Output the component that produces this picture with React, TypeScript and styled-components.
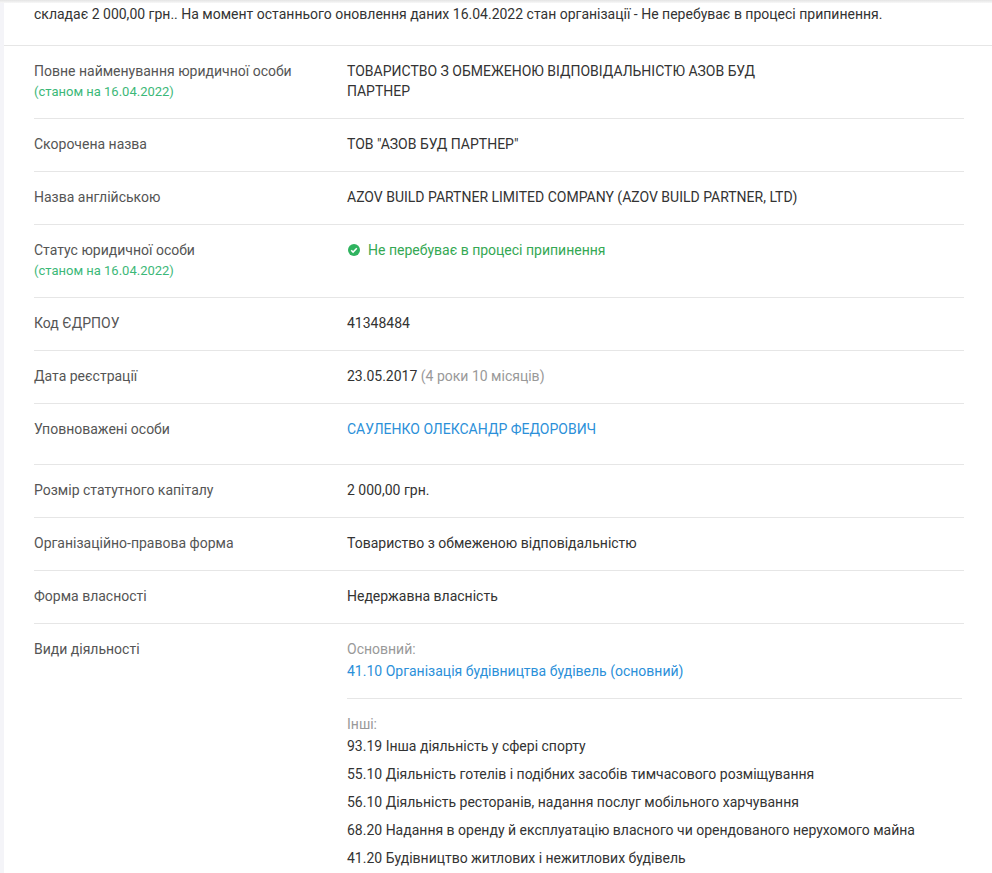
import React from 'react'
import styled, { createGlobalStyle } from 'styled-components'

const GlobalStyle = createGlobalStyle`
  html, body {
    margin: 0;
    height: 873px;
    overflow: hidden;
    background: #fff;
  }
  body {
    font-family: Roboto, "Liberation Sans", sans-serif;
    font-size: 14px;
    line-height: 20px;
    color: #333;
  }
`

const Page = styled.div`
  position: relative;
  height: 873px;
  overflow: hidden;
  padding-left: 4px;
  background: #f4f4f8;
`

const TopShadow = styled.div`
  position: absolute;
  top: 0;
  left: 0;
  right: 0;
  height: 3px;
  background: linear-gradient(#e4e4e4, #f8f8f8);
`

const Card = styled.div`
  background: #fff;
  height: 873px;
`

const Summary = styled.div`
  height: 41px;
  padding: 4px 30px 0;
  border-bottom: 1px solid #e6e6e6;
  white-space: nowrap;
  color: #333;
`

const Table = styled.div`
  padding: 0 28px 0 30px;
`

const Row = styled.div<{ $extra?: number }>`
  display: flex;
  padding: 15px 0 ${({ $extra }) => 17 + ($extra || 0)}px;
  border-bottom: 1px solid #e6e6e6;

  &:last-child {
    border-bottom: none;
  }
`

const Label = styled.div`
  width: 313px;
  flex: none;
  color: #555;
`

const AsOf = styled.div`
  margin: 1px 0 -1px;
  color: #3cb878;
  font-size: 13px;
`

const Value = styled.div`
  flex: 1;
  min-width: 0;
  color: #333;
`

const Name = styled.div`
  max-width: 440px;
`

const Status = styled.div`
  display: flex;
  align-items: center;
  gap: 8px;
  color: #34a853;
`

const StatusIcon = styled.svg`
  width: 12px;
  height: 12px;
  margin-left: 1px;
  flex: none;
`

const Muted = styled.span`
  color: #999;
`

const Link = styled.a`
  color: #2b90d9;
  text-decoration: none;
`

const GroupTitle = styled.div`
  color: #999;
  margin-bottom: 2px;
`

const MainActivity = styled.div`
  padding-bottom: 17px;
  margin-bottom: 15px;
  margin-right: 2px;
  border-bottom: 1px solid #e6e6e6;
`

const Activity = styled.div`
  margin-bottom: 8px;
`

const others = [
  '93.19 Інша діяльність у сфері спорту',
  '55.10 Діяльність готелів і подібних засобів тимчасового розміщування',
  '56.10 Діяльність ресторанів, надання послуг мобільного харчування',
  '68.20 Надання в оренду й експлуатацію власного чи орендованого нерухомого майна',
  '41.20 Будівництво житлових і нежитлових будівель'
]

export default function App() {
  return (
    <Page>
      <GlobalStyle />
      <Card>
        <Summary>
          складає 2 000,00 грн.. На момент останнього оновлення даних 16.04.2022 стан організації - Не перебуває в процесі припинення.
        </Summary>
        <Table>
          <Row>
            <Label>
              Повне найменування юридичної особи
              <AsOf>(станом на 16.04.2022)</AsOf>
            </Label>
            <Value>
              <Name>ТОВАРИСТВО З ОБМЕЖЕНОЮ ВІДПОВІДАЛЬНІСТЮ АЗОВ БУД ПАРТНЕР</Name>
            </Value>
          </Row>
          <Row>
            <Label>Скорочена назва</Label>
            <Value>ТОВ "АЗОВ БУД ПАРТНЕР"</Value>
          </Row>
          <Row>
            <Label>Назва англійською</Label>
            <Value>AZOV BUILD PARTNER LIMITED COMPANY (AZOV BUILD PARTNER, LTD)</Value>
          </Row>
          <Row>
            <Label>
              Статус юридичної особи
              <AsOf>(станом на 16.04.2022)</AsOf>
            </Label>
            <Value>
              <Status>
                <StatusIcon viewBox="0 0 12 12">
                  <circle cx="6" cy="6" r="6" fill="#2fb35f" />
                  <path d="M3.2 6.2l1.9 1.9 3.7-3.8" fill="none" stroke="#fff" strokeWidth="1.5" />
                </StatusIcon>
                Не перебуває в процесі припинення
              </Status>
            </Value>
          </Row>
          <Row>
            <Label>Код ЄДРПОУ</Label>
            <Value>41348484</Value>
          </Row>
          <Row>
            <Label>Дата реєстрації</Label>
            <Value>
              23.05.2017 <Muted>(4 роки 10 місяців)</Muted>
            </Value>
          </Row>
          <Row $extra={8}>
            <Label>Уповноважені особи</Label>
            <Value>
              <Link href="#">САУЛЕНКО ОЛЕКСАНДР ФЕДОРОВИЧ</Link>
            </Value>
          </Row>
          <Row>
            <Label>Розмір статутного капіталу</Label>
            <Value>2 000,00 грн.</Value>
          </Row>
          <Row>
            <Label>Організаційно-правова форма</Label>
            <Value>Товариство з обмеженою відповідальністю</Value>
          </Row>
          <Row>
            <Label>Форма власності</Label>
            <Value>Недержавна власність</Value>
          </Row>
          <Row>
            <Label>Види діяльності</Label>
            <Value>
              <GroupTitle>Основний:</GroupTitle>
              <MainActivity>
                <Link href="#">41.10 Організація будівництва будівель (основний)</Link>
              </MainActivity>
              <GroupTitle>Інші:</GroupTitle>
              {others.map(item => (
                <Activity key={item}>{item}</Activity>
              ))}
            </Value>
          </Row>
        </Table>
      </Card>
      <TopShadow />
    </Page>
  )
}
